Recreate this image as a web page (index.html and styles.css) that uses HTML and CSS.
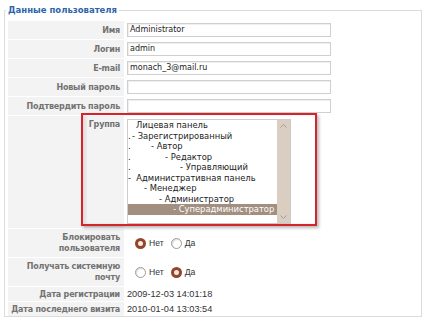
FILE: index.html
```html
<!DOCTYPE html>
<html lang="ru">
<head>
    <meta charset="UTF-8">
    <title>Данные пользователя</title>
    <link rel="stylesheet" href="styles.css">
</head>
<body>
    <fieldset class="user-box">
        <legend>Данные пользователя</legend>
        <div class="form">
            <div class="label">Имя</div>
            <div class="value"><div class="input">Administrator</div></div>

            <div class="label">Логин</div>
            <div class="value"><div class="input">admin</div></div>

            <div class="label">E-mail</div>
            <div class="value"><div class="input">monach_3@mail.ru</div></div>

            <div class="label">Новый пароль</div>
            <div class="value"><div class="input"></div></div>

            <div class="label">Подтвердить пароль</div>
            <div class="value"><div class="input"></div></div>

            <!-- Группа -->
            <div class="label top">Группа</div>
            <div class="value top">
                <div class="listbox">
                    <div class="options">
                        <div class="opt o1"><span class="name">Лицевая панель</span></div>
                        <div class="opt o2"><span class="dot">.</span><span class="name">- Зарегистрированный</span></div>
                        <div class="opt o3"><span class="dot">.</span><span class="name">- Автор</span></div>
                        <div class="opt o4"><span class="dot">.</span><span class="name">- Редактор</span></div>
                        <div class="opt o5"><span class="dot">.</span><span class="name">- Управляющий</span></div>
                        <div class="opt o6"><span class="name">-&nbsp; Административная панель</span></div>
                        <div class="opt o7"><span class="name">- Менеджер</span></div>
                        <div class="opt o8"><span class="name">- Администратор</span></div>
                        <div class="opt o9 selected"><span class="name">- Суперадминистратор</span></div>
                    </div>
                    <div class="scrollbar">
                        <svg width="7" height="4" viewBox="0 0 7 4"><polyline points="0.5,3.5 3.5,0.5 6.5,3.5" fill="none" stroke="#a89c92" stroke-width="1"/></svg>
                        <svg width="7" height="4" viewBox="0 0 7 4"><polyline points="0.5,0.5 3.5,3.5 6.5,0.5" fill="none" stroke="#a89c92" stroke-width="1"/></svg>
                    </div>
                </div>
                <div class="highlight"></div>
            </div>

            <div class="label">Блокировать<br>пользователя</div>
            <div class="value radios">
                <span class="radio on"></span><span class="rlabel">Нет</span>
                <span class="radio"></span><span class="rlabel">Да</span>
            </div>

            <div class="label">Получать системную<br>почту</div>
            <div class="value radios">
                <span class="radio"></span><span class="rlabel">Нет</span>
                <span class="radio on"></span><span class="rlabel">Да</span>
            </div>

            <div class="label">Дата регистрации</div>
            <div class="value text">2009-12-03 14:01:18</div>

            <div class="label">Дата последнего визита</div>
            <div class="value text">2010-01-04 13:03:54</div>
        </div>
    </fieldset>
</body>
</html>
```

FILE: styles.css
```css
body {
    margin: 0;
    font-family: "DejaVu Sans", Verdana, sans-serif;
    background-color: #fff;
    color: #333;
}
.user-box {
    margin: 5px 2px 0 4px;
    padding: 0 3px 0 3px;
    border: 1px solid #dcdcdc;
    min-width: 0;
}
.user-box legend {
    margin-left: -2px;
    padding: 0 2px;
    font-size: 8.5px;
    line-height: 11px;
    font-weight: bold;
    color: #2d64aa;
}
.form {
    display: grid;
    grid-template-columns: 116px 1fr;
    grid-template-rows: 18px 18px 18px 18px 18px 112px 28px 28px 14px 14px;
    row-gap: 1px;
    margin-top: 5px;
}
.label {
    background-color: #f3f3f3;
    display: flex;
    flex-direction: column;
    justify-content: center;
    align-items: flex-end;
    text-align: right;
    padding-right: 4px;
    font-size: 8px;
    letter-spacing: -0.2px;
    line-height: 11px;
    font-weight: bold;
    color: #727272;
    white-space: nowrap;
}
.label.top {
    justify-content: flex-start;
    padding-top: 3px;
}
.value {
    display: flex;
    align-items: center;
    padding-left: 3px;
}
.value.top {
    align-items: flex-start;
    position: relative;
}
.input {
    width: 198px;
    height: 12px;
    border: 1px solid #cfcfcf;
    box-shadow: inset 1px 1px 1px #eee;
    padding: 0 2px;
    font-size: 8px;
    line-height: 12px;
    color: #222;
}
.listbox {
    margin-top: 3px;
    width: 162px;
    height: 103px;
    border: 1px solid #cdcdcd;
    display: flex;
}
.options {
    flex: 1;
    font-size: 8.4px;
    color: #222;
}
.opt {
    display: flex;
    height: 10.5px;
    line-height: 10.5px;
    white-space: nowrap;
}
.opt .dot {
    width: 3px;
}
.o1 .name { margin-left: 8px; }
.o2 .name { margin-left: 1px; }
.o3 .name { margin-left: 20px; }
.o4 .name { margin-left: 34px; }
.o5 .name { margin-left: 49px; }
.o6 .name { margin-left: 0; }
.o7 .name { margin-left: 16px; }
.o8 .name { margin-left: 31px; }
.o9 .name { margin-left: 45px; }
.opt.selected {
    background-color: #a28f80;
    color: #fff;
}
.scrollbar {
    width: 13px;
    background-color: #dacec3;
    display: flex;
    flex-direction: column;
    justify-content: space-between;
    align-items: center;
    padding: 4px 0;
}
/* Красная рамка поверх блока группы */
.highlight {
    position: absolute;
    top: -3px;
    left: -43px;
    width: 232px;
    height: 109px;
    border: 2px solid #d3252b;
    box-shadow: 2px 2px 3px rgba(0, 0, 0, 0.28), inset 3px 0 3px rgba(0, 0, 0, 0.08);
}
.radios {
    padding-left: 11px;
    font-family: "Liberation Sans", Arial, sans-serif;
    font-size: 8.6px;
}
.radio {
    width: 9px;
    height: 9px;
    border: 1px solid #9c9c9c;
    border-radius: 50%;
    background: #fff;
    box-shadow: inset 1px 1px 1px #ddd;
}
.radio.on {
    width: 5px;
    height: 5px;
    border: 3px solid #93452c;
    background: #f7ebe6;
    box-shadow: none;
}
.rlabel {
    margin-left: 3px;
    margin-right: 7px;
}
.text {
    font-family: "Liberation Sans", Arial, sans-serif;
    font-size: 9.2px;
    color: #333;
    padding-left: 3px;
}
```
